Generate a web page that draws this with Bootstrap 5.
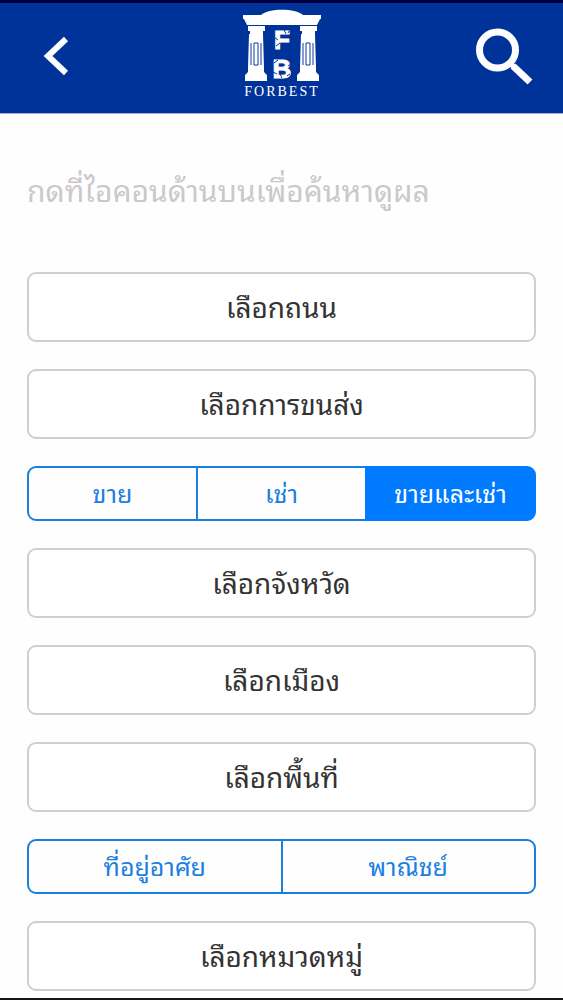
<!DOCTYPE html>
<html lang="th">
<head>
<meta charset="utf-8">
<meta name="viewport" content="width=device-width, initial-scale=1">
<title>FORBEST</title>
<link href="https://cdn.jsdelivr.net/npm/bootstrap@5.3.0/dist/css/bootstrap.min.css" rel="stylesheet">
<style>
  :root { --brand: #003399; --ios-blue: #007aff; --ios-line: #1a7fe0; --gutter: 27px; }
  body { font-family: "Noto Sans Thai Looped", "Noto Looped Thai", Loma, Garuda, "Noto Sans Thai", "Liberation Sans", sans-serif; color: #333; background: #fefefe; border-bottom: 2px solid #151515; }
  .top-bar { height: 114px; padding: 0 var(--gutter); background: var(--brand); border-top: 3px solid #000040; border-bottom: 1px solid #a3aed0; }
  .icon-btn { width: 60px; height: 60px; }
  .brand-word { font-family: "Liberation Serif", serif; font-size: 14px; letter-spacing: 2px; }
  .brand-mono { font-family: "Liberation Sans", sans-serif; font-size: 26px; font-weight: 700; }
  .search-form { padding: 47px var(--gutter) 7px; gap: 27px; }
  .keyword { height: 54px; margin-bottom: 30px; font-size: 30px; color: #333; }
  .keyword::placeholder { color: #cbc8cc; opacity: 1; }
  .picker { height: 70px; padding: 0 0 2px; font-size: 28px; line-height: 40px; color: #333; background: #fff; border: 2px solid #cfcfcf; border-radius: 9px; }
  .segments { height: 55px; }
  .segments .btn { --bs-btn-color: var(--ios-line); --bs-btn-border-color: var(--ios-line); --bs-btn-border-width: 2px; --bs-btn-border-radius: 9px;
    --bs-btn-active-bg: var(--ios-blue); --bs-btn-active-border-color: var(--ios-blue); --bs-btn-active-color: #fff;
    flex: 1 1 0; font-size: 25px; line-height: 36px; }
  .segments.btn-group > .btn:not(:first-child) { margin-left: -2px; }
  .segments.btn-group > .btn-check:first-child + .btn:not(:first-child) { margin-left: 0; }
</style>
</head>
<body>
<header class="top-bar d-flex align-items-center justify-content-between">
  <button type="button" class="icon-btn btn p-0 border-0" aria-label="ย้อนกลับ">
    <svg class="d-block" width="60" height="60" viewBox="0 0 60 60" fill="none" stroke="#fff" stroke-width="6"><path d="M39 11 21 28l18 17"/></svg>
  </button>
  <a href="#" class="d-block" aria-label="FORBEST">
    <svg class="d-block" width="84" height="100" viewBox="240 8 84 100" fill="#fff">
      <path d="M243 15h18c8-7 34-7 42 0h18v4h-78zM244 19h76l-3 6h-70z"/>
      <path d="M248 26h17v5h-2v3h-13v-3h-2zM300 26h17v5h-2v3h-13v-3h-2z"/>
      <path d="M249 34h14l1 34h-16zM301 34h14l1 34h-16z"/>
      <path d="M248 68h16v4l3 3v6h-22v-6l3-3zM300 68h16v4l3 3v6h-22v-6l3-3z"/>
      <path d="M251 43v22M254 43v22h4v-22zM261 43v22M303 43v22M306 43v22h4v-22zM313 43v22" fill="none" stroke="#0a3b9e" stroke-width="1"/>
      <text class="brand-mono" x="282" y="49" text-anchor="middle" stroke="#fff">F</text>
      <text class="brand-mono" x="282" y="78" text-anchor="middle" stroke="#fff">B</text>
      <path d="M274 37l4 3M284 30l2 4M276 46l4-3M274 63l4-3M280 74l2 4M288 66l4-3M273 72l4 2M287 76l3-2M289 31l-1 2" fill="none" stroke="#003399" stroke-width="1"/>
      <text class="brand-word" x="282" y="96" text-anchor="middle">FORBEST</text>
    </svg>
  </a>
  <button type="submit" form="search" class="icon-btn btn p-0 border-0" aria-label="ค้นหา">
    <svg class="d-block" width="60" height="60" viewBox="0 0 60 60" fill="none" stroke="#fff"><circle cx="21.500" cy="22" r="18" stroke-width="7"/><path d="M34 35l5 5" stroke-width="5"/><path d="M37 38 54 54" stroke-width="7"/></svg>
  </button>
</header>
<form id="search" class="search-form d-flex flex-column">
  <input type="search" class="keyword form-control p-0 border-0 bg-transparent shadow-none" aria-label="ค้นหา" placeholder="กดที่ไอคอนด้านบนเพื่อค้นหาดูผล">
  <button type="button" class="picker btn w-100">เลือกถนน</button>
  <button type="button" class="picker btn w-100">เลือกการขนส่ง</button>
  <div class="segments btn-group w-100" role="group">
    <input type="radio" class="btn-check" name="deal" id="sale"><label class="btn" for="sale">ขาย</label>
    <input type="radio" class="btn-check" name="deal" id="rent"><label class="btn" for="rent">เช่า</label>
    <input type="radio" class="btn-check" name="deal" id="both" checked><label class="btn" for="both">ขายและเช่า</label>
  </div>
  <button type="button" class="picker btn w-100">เลือกจังหวัด</button>
  <button type="button" class="picker btn w-100">เลือกเมือง</button>
  <button type="button" class="picker btn w-100">เลือกพื้นที่</button>
  <div class="segments btn-group w-100" role="group">
    <input type="radio" class="btn-check" name="kind" id="home"><label class="btn" for="home">ที่อยู่อาศัย</label>
    <input type="radio" class="btn-check" name="kind" id="trade"><label class="btn" for="trade">พาณิชย์</label>
  </div>
  <button type="button" class="picker btn w-100">เลือกหมวดหมู่</button>
</form>
<script src="https://cdn.jsdelivr.net/npm/bootstrap@5.3.0/dist/js/bootstrap.bundle.min.js"></script>
</body>
</html>
